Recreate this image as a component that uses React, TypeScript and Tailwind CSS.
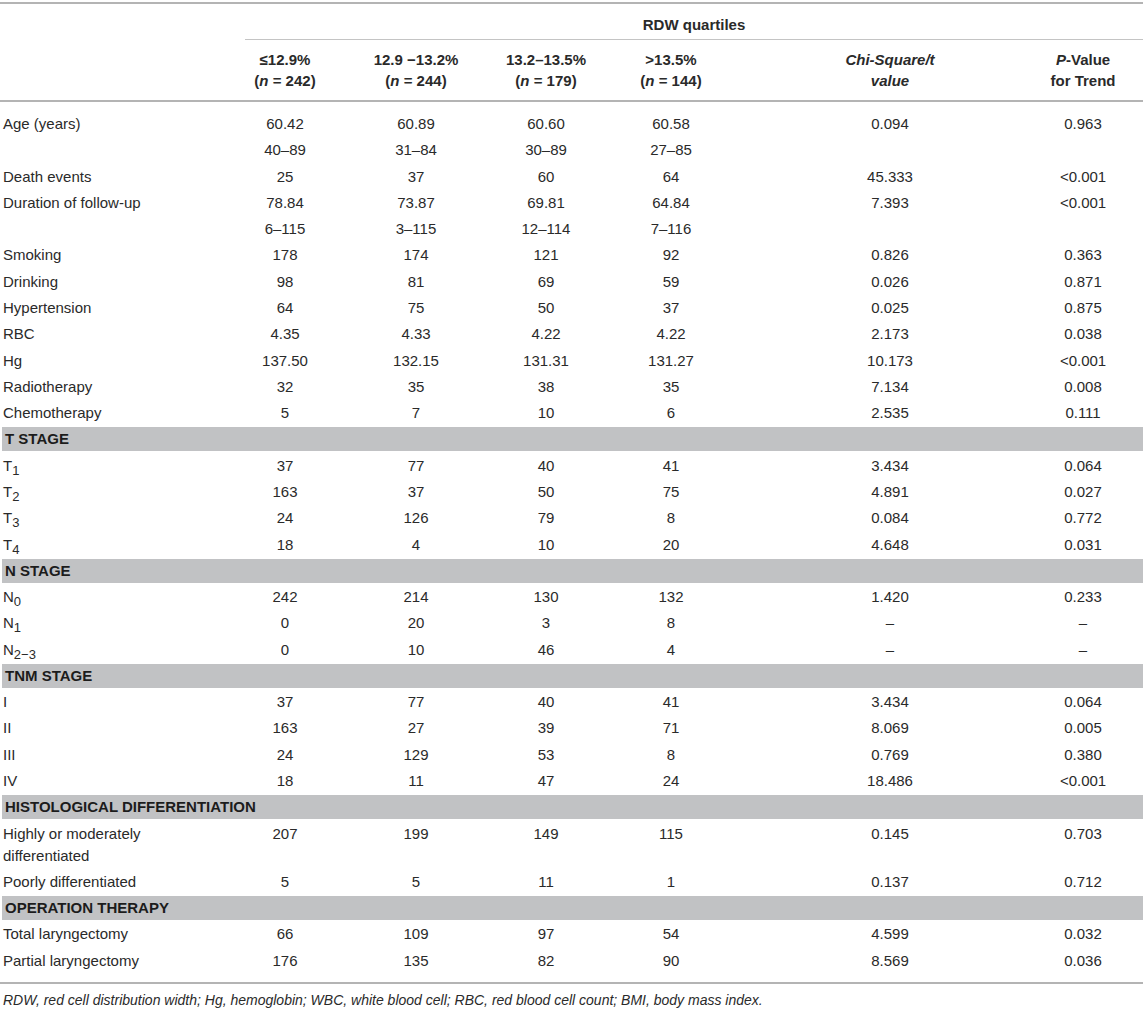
import React from "react";

type Row =
  | { kind: "section"; label: string }
  | { kind: "data"; label: React.ReactNode; values: string[]; first?: boolean; last?: boolean };

const Sub = ({ children }: { children: React.ReactNode }) => (
  <sub className="bottom-[-4px] text-[13px]">{children}</sub>
);

const rows: Row[] = [
  { kind: "data", label: "Age (years)", values: ["60.42", "60.89", "60.60", "60.58", "0.094", "0.963"], first: true },
  { kind: "data", label: "", values: ["40–89", "31–84", "30–89", "27–85", "", ""] },
  { kind: "data", label: "Death events", values: ["25", "37", "60", "64", "45.333", "<0.001"] },
  { kind: "data", label: "Duration of follow-up", values: ["78.84", "73.87", "69.81", "64.84", "7.393", "<0.001"] },
  { kind: "data", label: "", values: ["6–115", "3–115", "12–114", "7–116", "", ""] },
  { kind: "data", label: "Smoking", values: ["178", "174", "121", "92", "0.826", "0.363"] },
  { kind: "data", label: "Drinking", values: ["98", "81", "69", "59", "0.026", "0.871"] },
  { kind: "data", label: "Hypertension", values: ["64", "75", "50", "37", "0.025", "0.875"] },
  { kind: "data", label: "RBC", values: ["4.35", "4.33", "4.22", "4.22", "2.173", "0.038"] },
  { kind: "data", label: "Hg", values: ["137.50", "132.15", "131.31", "131.27", "10.173", "<0.001"] },
  { kind: "data", label: "Radiotherapy", values: ["32", "35", "38", "35", "7.134", "0.008"] },
  { kind: "data", label: "Chemotherapy", values: ["5", "7", "10", "6", "2.535", "0.111"] },
  { kind: "section", label: "T STAGE" },
  { kind: "data", label: <>T<Sub>1</Sub></>, values: ["37", "77", "40", "41", "3.434", "0.064"] },
  { kind: "data", label: <>T<Sub>2</Sub></>, values: ["163", "37", "50", "75", "4.891", "0.027"] },
  { kind: "data", label: <>T<Sub>3</Sub></>, values: ["24", "126", "79", "8", "0.084", "0.772"] },
  { kind: "data", label: <>T<Sub>4</Sub></>, values: ["18", "4", "10", "20", "4.648", "0.031"] },
  { kind: "section", label: "N STAGE" },
  { kind: "data", label: <>N<Sub>0</Sub></>, values: ["242", "214", "130", "132", "1.420", "0.233"] },
  { kind: "data", label: <>N<Sub>1</Sub></>, values: ["0", "20", "3", "8", "–", "–"] },
  { kind: "data", label: <>N<Sub>2−3</Sub></>, values: ["0", "10", "46", "4", "–", "–"] },
  { kind: "section", label: "TNM STAGE" },
  { kind: "data", label: "I", values: ["37", "77", "40", "41", "3.434", "0.064"] },
  { kind: "data", label: "II", values: ["163", "27", "39", "71", "8.069", "0.005"] },
  { kind: "data", label: "III", values: ["24", "129", "53", "8", "0.769", "0.380"] },
  { kind: "data", label: "IV", values: ["18", "11", "47", "24", "18.486", "<0.001"] },
  { kind: "section", label: "HISTOLOGICAL DIFFERENTIATION" },
  { kind: "data", label: "Highly or moderately differentiated", values: ["207", "199", "149", "115", "0.145", "0.703"] },
  { kind: "data", label: "Poorly differentiated", values: ["5", "5", "11", "1", "0.137", "0.712"] },
  { kind: "section", label: "OPERATION THERAPY" },
  { kind: "data", label: "Total laryngectomy", values: ["66", "109", "97", "54", "4.599", "0.032"] },
  { kind: "data", label: "Partial laryngectomy", values: ["176", "135", "82", "90", "8.569", "0.036"], last: true },
];

export default function App() {
  return (
    <div
      className="w-[1143px] bg-white text-[#2a2a2a] text-[15px]"
      style={{ fontFamily: '"Liberation Sans", Arial, Helvetica, sans-serif' }}
    >
      <div className="h-[2px]" />
      <table className="w-[1143px] table-fixed border-collapse border-t-2 border-t-[#b4b4b4]">
        <colgroup>
          <col className="w-[222px]" />
          <col className="w-[126px]" />
          <col className="w-[136px]" />
          <col className="w-[124px]" />
          <col className="w-[126px]" />
          <col className="w-[312px]" />
          <col className="w-[97px]" />
        </colgroup>
        <thead>
          <tr>
            <th className="p-0" />
            <th colSpan={6} className="p-0 font-bold">
              <div className="ml-[23px] border-b border-b-[#c4c4c4] pt-[10px] pb-[3px] leading-[22px] text-center">
                RDW quartiles
              </div>
            </th>
          </tr>
          <tr className="border-b-2 border-b-[#b4b4b4]">
            <th className="p-0" />
            <th className="pt-[9px] pb-[9px] px-0 text-center font-bold leading-[21px]">
              ≤12.9%
              <br />(<i>n</i> = 242)
            </th>
            <th className="pt-[9px] pb-[9px] px-0 text-center font-bold leading-[21px]">
              12.9 −13.2%
              <br />(<i>n</i> = 244)
            </th>
            <th className="pt-[9px] pb-[9px] px-0 text-center font-bold leading-[21px]">
              13.2–13.5%
              <br />(<i>n</i> = 179)
            </th>
            <th className="pt-[9px] pb-[9px] px-0 text-center font-bold leading-[21px]">
              &gt;13.5%
              <br />(<i>n</i> = 144)
            </th>
            <th className="pt-[9px] pb-[9px] px-0 text-center font-bold italic leading-[21px]">
              Chi-Square/t
              <br />value
            </th>
            <th className="pt-[9px] pb-[9px] pl-0 pr-[23px] text-center font-bold leading-[21px]">
              <i>P</i>-Value
              <br />for Trend
            </th>
          </tr>
        </thead>
        <tbody className="border-b-2 border-b-[#b4b4b4]">
          {rows.map((r, i) => {
            if (r.kind === "section") {
              return (
                <tr key={i}>
                  <td colSpan={7} className="px-0 py-[1.15px]">
                    <div className="ml-[2px] flex h-[24px] items-center bg-[#c1c2c4] pl-[3px] font-bold leading-[22px] text-[#1c1c1c]">
                      {r.label}
                    </div>
                  </td>
                </tr>
              );
            }
            const pt = r.first ? "pt-[11px]" : "pt-[2.15px]";
            const pb = r.last ? "pb-[10px]" : "pb-[2.15px]";
            return (
              <tr key={i}>
                <td className={`${pt} ${pb} pl-[3px] pr-[8px] align-top leading-[22px]`}>{r.label}</td>
                {r.values.map((v, j) => (
                  <td
                    key={j}
                    className={`${pt} ${pb} ${j === 5 ? "pl-0 pr-[23px]" : "px-0"} text-center align-top leading-[22px]`}
                  >
                    {v}
                  </td>
                ))}
              </tr>
            );
          })}
        </tbody>
      </table>
      <div className="pl-[3px] pt-[7px] pb-[8px] text-[14px] italic leading-[18px] text-[#2a2a2a]">
        RDW, red cell distribution width; Hg, hemoglobin; WBC, white blood cell; RBC, red blood cell count; BMI, body mass index.
      </div>
    </div>
  );
}
